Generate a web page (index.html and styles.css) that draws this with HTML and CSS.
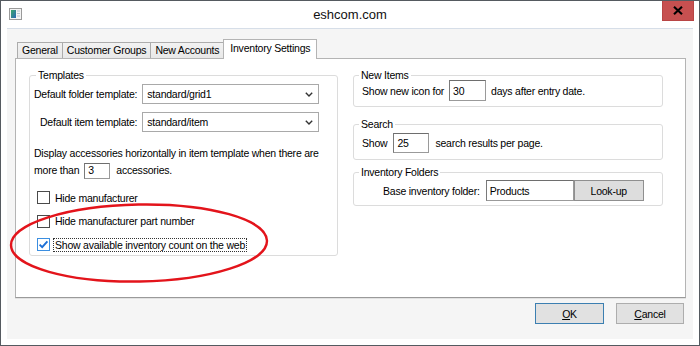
FILE: index.html
```html
<!DOCTYPE html>
<html>
<head>
<meta charset="utf-8">
<link rel="stylesheet" href="styles.css">
</head>
<body>
<div class="window">
  <div class="titlebar">
    <div class="app-icon">
      <svg width="13" height="12" viewBox="0 0 13 12">
        <defs>
          <linearGradient id="g" x1="0" y1="0" x2="1" y2="1">
            <stop offset="0" stop-color="#3aa86a"/>
            <stop offset="1" stop-color="#2a66b8"/>
          </linearGradient>
        </defs>
        <rect x="0.5" y="0.5" width="12" height="11" fill="#f4f4f4" stroke="#9a9a9a"/>
        <rect x="2" y="2" width="5" height="8" fill="url(#g)"/>
        <rect x="8" y="2.5" width="3" height="1" fill="#b8c4d0"/>
        <rect x="8" y="5" width="3" height="1" fill="#b8c4d0"/>
        <rect x="8" y="7.5" width="3" height="1" fill="#b8c4d0"/>
      </svg>
    </div>
    <div class="title">eshcom.com</div>
    <div class="close">
      <svg width="10" height="9" viewBox="0 0 10 9">
        <path d="M1 0.8 L9 8.2 M9 0.8 L1 8.2" stroke="#000" stroke-width="2.1"/>
      </svg>
    </div>
  </div>
  <div class="frame">
    <div class="client">
      <div class="tabs">
        <div class="tab">General</div>
        <div class="tab">Customer Groups</div>
        <div class="tab">New Accounts</div>
        <div class="tab tab-active">Inventory Settings</div>
      </div>
      <div class="panel">
        <fieldset class="group group-templates">
          <legend>Templates</legend>
          <div class="tpl-grid">
            <span class="lbl">Default folder template:</span>
            <div class="combo"><span>standard/grid1</span>
              <svg width="8" height="5" viewBox="0 0 8 5"><path d="M0.8 0.8 L4 4 L7.2 0.8" fill="none" stroke="#333" stroke-width="1.4"/></svg>
            </div>
            <span class="lbl">Default item template:</span>
            <div class="combo"><span>standard/item</span>
              <svg width="8" height="5" viewBox="0 0 8 5"><path d="M0.8 0.8 L4 4 L7.2 0.8" fill="none" stroke="#333" stroke-width="1.4"/></svg>
            </div>
          </div>
          <div class="para">
            <div class="para-line">Display accessories horizontally in item template when there are</div>
            <div class="para-line para-inline"><span>more than</span><span class="textbox tb-acc">3</span><span>accessories.</span></div>
          </div>
          <div class="checks">
            <div class="check"><span class="box"></span><span class="check-text">Hide manufacturer</span></div>
            <div class="check"><span class="box"></span><span class="check-text">Hide manufacturer part number</span></div>
            <div class="check"><span class="box box-checked">
              <svg width="13" height="13" viewBox="0 0 13 13"><path d="M2.6 6.6 L5.2 9.2 L10.4 3.4" fill="none" stroke="#1c6fd6" stroke-width="1.9"/></svg>
            </span><span class="check-text focus">Show available inventory count on the web</span></div>
          </div>
        </fieldset>
        <div class="right-col">
          <fieldset class="group group-new">
            <legend>New Items</legend>
            <div class="row row-new"><span>Show new icon for</span><span class="textbox tb-days">30</span><span>days after entry date.</span></div>
          </fieldset>
          <fieldset class="group group-search">
            <legend>Search</legend>
            <div class="row row-search"><span>Show</span><span class="textbox tb-results">25</span><span>search results per page.</span></div>
          </fieldset>
          <fieldset class="group group-folders">
            <legend>Inventory Folders</legend>
            <div class="row row-folders"><span class="lbl-folder">Base inventory folder:</span><span class="textbox tb-folder">Products</span><span class="btn btn-lookup">Look-up</span></div>
          </fieldset>
        </div>
      </div>
      <div class="buttons">
        <div class="btn btn-dialog btn-default"><span class="ul">O</span>K</div>
        <div class="btn btn-dialog btn-cancel"><span class="ul">C</span>ancel</div>
      </div>
    </div>
  </div>
  <svg class="annotation" width="266" height="84" viewBox="0 0 266 84">
    <ellipse cx="132" cy="42" rx="128" ry="38.5" fill="none" stroke="#e3141b" stroke-width="2.4" transform="rotate(-1 132 42)"/>
  </svg>
</div>
</body>
</html>
```
FILE: styles.css
```css
* { box-sizing: border-box; }
html, body { margin: 0; padding: 0; }
body {
  font-family: "Liberation Sans", Arial, sans-serif;
  font-size: 10.5px;
  letter-spacing: -0.22px;
  color: #000;
  width: 700px;
  height: 346px;
  overflow: hidden;
}
.window {
  position: relative;
  width: 700px;
  height: 346px;
  border: 1px solid #555a60;
  background: #fff;
  display: flex;
  flex-direction: column;
}
.titlebar {
  height: 27px;
  display: grid;
  grid-template-columns: 1fr auto 1fr;
  align-items: start;
  flex: none;
}
.app-icon { margin: 7px 0 0 8px; height: 12px; }
.app-icon svg { display: block; }
.title {
  font-size: 13px;
  line-height: 28px;
  letter-spacing: 0;
  color: #111;
}
.close {
  justify-self: end;
  margin-right: 5px;
  width: 32px;
  height: 20px;
  background: #c75050;
  border: 1px solid #b84545;
  border-top: none;
  display: flex;
  align-items: center;
  justify-content: center;
}
.close svg { display: block; }
.frame {
  flex: 1;
  display: flex;
  padding: 0 6px 6px 6px;
}
.client {
  flex: 1;
  background: #f5f5f5;
  border-top: 1px solid #d6dee8;
  padding: 10px 7px 0 8px;
  display: flex;
  flex-direction: column;
}
.tabs {
  display: flex;
  align-items: flex-end;
  padding-left: 2px;
  height: 19px;
}
.tab {
  height: 16px;
  line-height: 15px;
  padding: 0 4px;
  border: 1px solid #acacac;
  border-bottom: none;
  margin-right: -1px;
  background: linear-gradient(#f2f2f2, #e8e8e8);
  white-space: nowrap;
}
.tab-active {
  position: relative;
  z-index: 1;
  height: 20px;
  margin-bottom: -1px;
  line-height: 17px;
  padding: 0 6px 2px 6px;
  background: #fff;
  border-color: #b4b4b4;
}
.panel {
  height: 240px;
  background: #fff;
  border: 1px solid #b4b4b4;
  border-bottom-color: #9a9a9a;
  box-shadow: 0 1px 0 #e2e2e2;
  padding: 10px 0 0 13px;
  display: grid;
  grid-template-columns: 309px 310px;
  column-gap: 15px;
  align-items: start;
}
.group {
  margin: 0;
  border: 1px solid #dcdcdc;
  border-radius: 3px;
  min-width: 0;
}
.group legend {
  line-height: 12px;
  padding: 0 2px;
}
.group-templates { padding: 3px 18px 2px 4px; }
.group-templates legend { margin-left: 2px; }
.tpl-grid {
  display: grid;
  grid-template-columns: auto 1fr;
  column-gap: 5px;
  row-gap: 8px;
}
.lbl {
  text-align: right;
  line-height: 20px;
  white-space: nowrap;
}
.combo {
  height: 20px;
  border: 1px solid #a9a9a9;
  background: #fff;
  display: flex;
  align-items: center;
  justify-content: space-between;
  padding: 0 5px 0 4px;
}
.combo svg { display: block; }
.para { margin-top: 13px; }
.para-line { line-height: 17px; white-space: nowrap; }
.para-inline {
  height: 17px;
  display: flex;
  align-items: center;
}
.textbox {
  display: inline-flex;
  align-items: center;
  background: #fff;
  border: 1px solid #9a9a9a;
  border-top-color: #6e6e6e;
  border-left-color: #7a7a7a;
  padding-left: 3px;
  white-space: nowrap;
}
.tb-acc { width: 26px; height: 16px; margin: 0 6px 0 5px; }
.checks {
  margin-top: 10px;
  display: flex;
  flex-direction: column;
  gap: 6.5px;
}
.check {
  height: 17px;
  display: flex;
  align-items: center;
  padding-left: 3px;
}
.box {
  width: 13px;
  height: 13px;
  border: 1px solid #4a4a4a;
  background: #fff;
  margin-right: 3px;
  flex: none;
  position: relative;
}
.box-checked {
  border-color: #3b8ee0;
}
.box-checked svg {
  position: absolute;
  left: -1px;
  top: -1px;
}
.check-text { padding: 0 1px; line-height: 12px; border: 1px solid transparent; white-space: nowrap; }
.focus { border: 1px dotted #333; }
.right-col { display: flex; flex-direction: column; }
.group-new, .group-search, .group-folders { padding: 0 8px 0 8px; }
.right-col legend { margin-left: -3px; }
.row {
  display: flex;
  align-items: center;
  white-space: nowrap;
}
.group-new { padding-bottom: 5px; }
.row-new { height: 21px; margin-top: -1px; }
.tb-days { width: 37px; height: 21px; margin: 0 5px 0 5px; }
.group-search { margin-top: 11px; padding-bottom: 6px; }
.row-search { height: 20px; margin-top: 3px; }
.tb-results { width: 36px; height: 20px; margin: 0 6px 0 6px; }
.group-folders { margin-top: 6px; padding-bottom: 4px; }
.row-folders { height: 21px; margin-top: 2px; }
.lbl-folder { margin-left: 21px; margin-right: 6px; }
.tb-folder { width: 88px; height: 21px; }
.btn {
  display: flex;
  align-items: center;
  justify-content: center;
  background: #e1e1e1;
  border: 1px solid #adadad;
}
.btn-lookup { width: 70px; height: 21px; background: #dddddd; border-color: #8f8f8f; }
.buttons {
  display: flex;
  justify-content: flex-end;
  gap: 12px;
  margin-top: 5px;
  padding-right: 2px;
}
.btn-dialog { height: 21px; }
.btn-default { width: 69px; border-color: #3c7fb1; }
.btn-cancel { width: 68px; }
.ul { text-decoration: underline; }
.annotation {
  position: absolute;
  left: 6px;
  top: 200px;
}
```
